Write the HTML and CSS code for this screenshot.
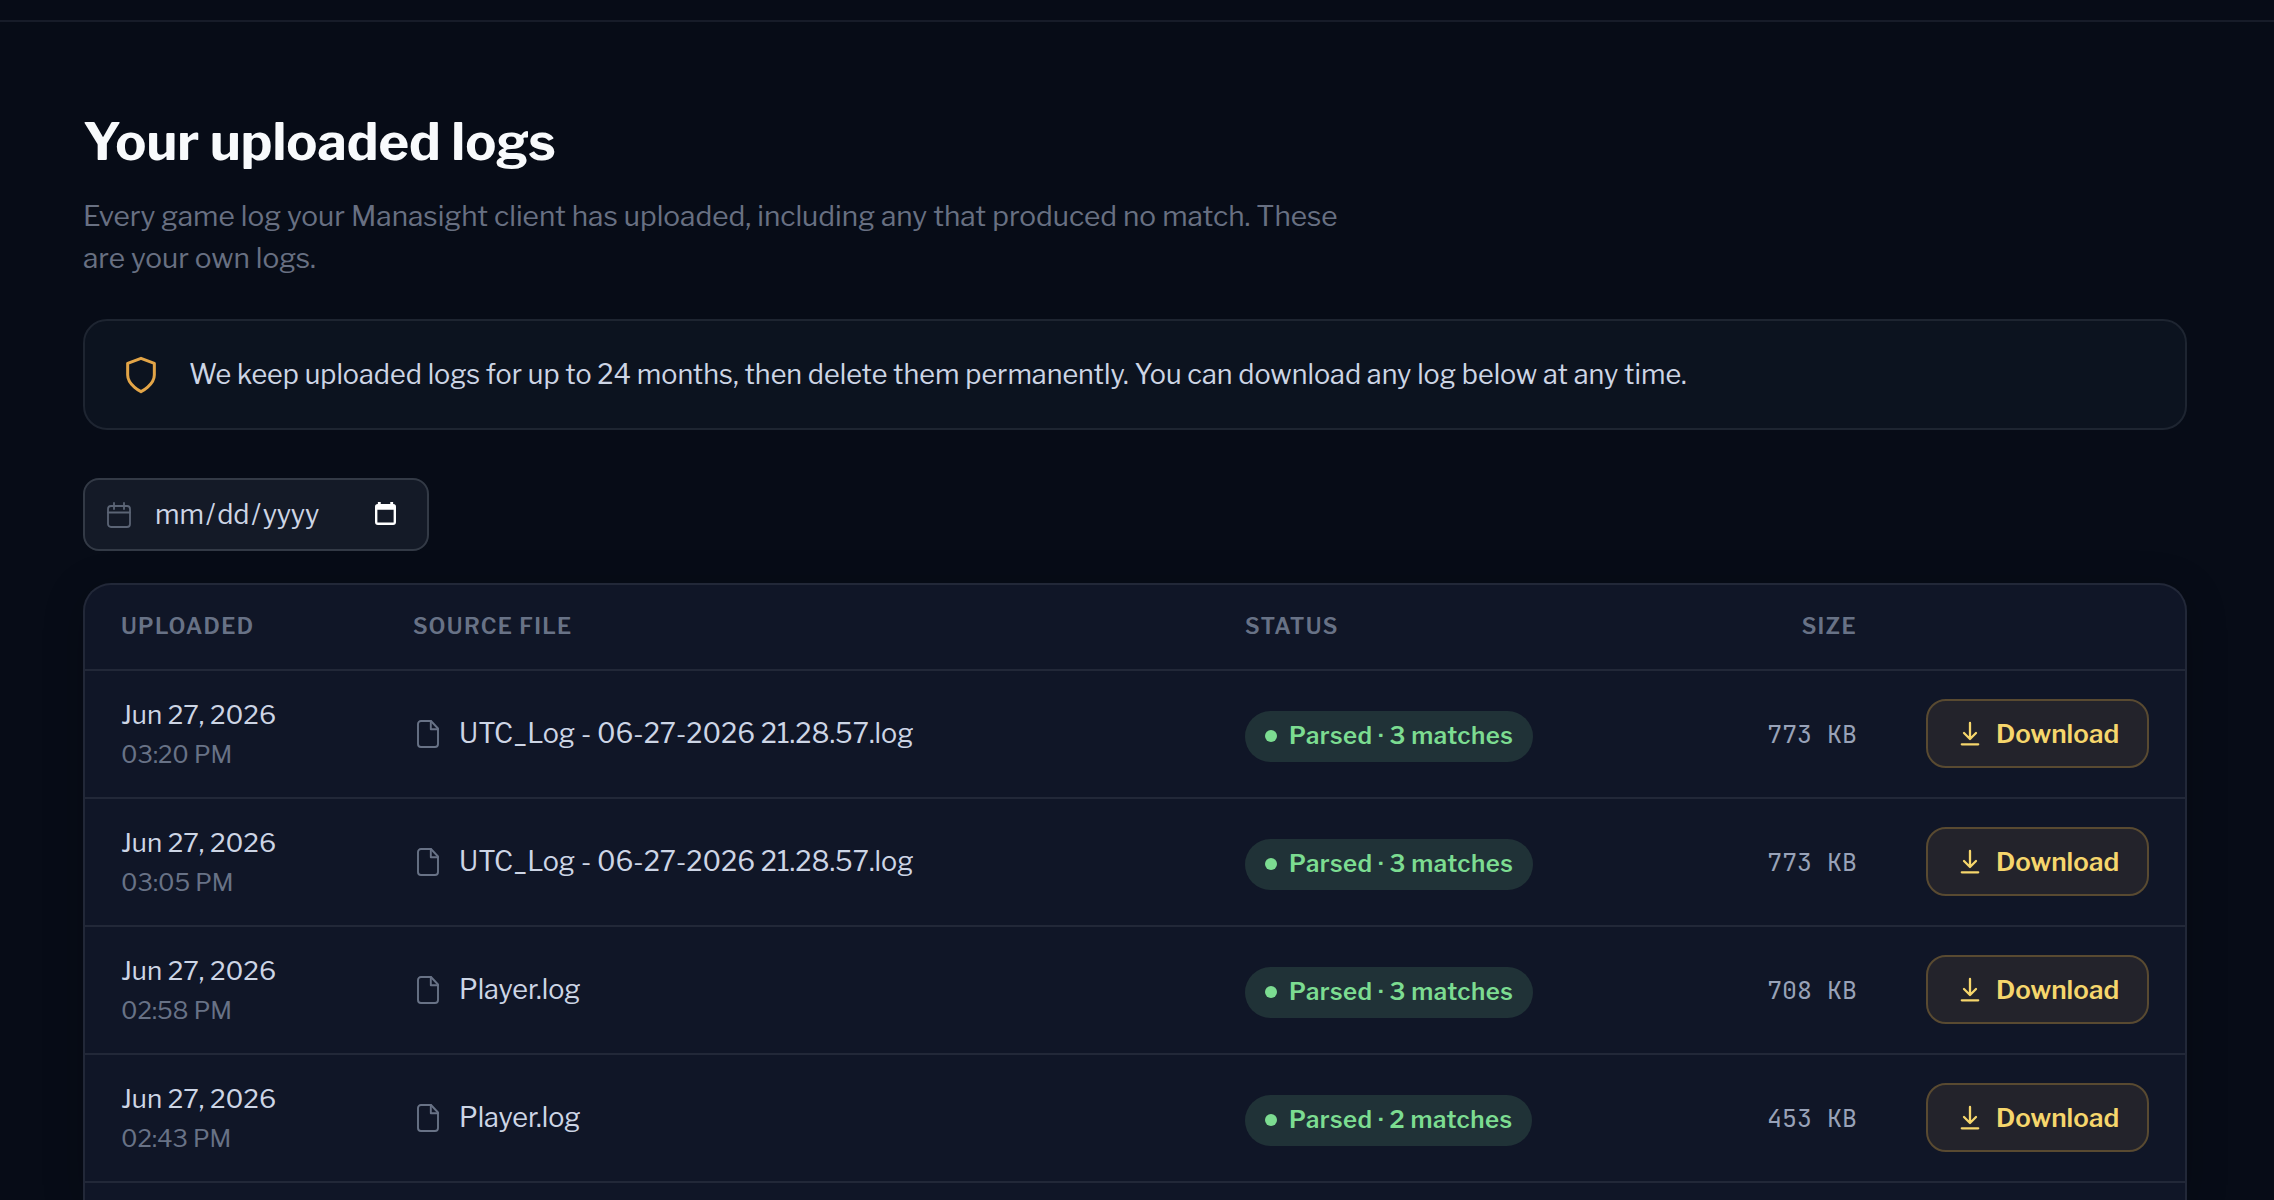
FILE: index.html
```html
<!DOCTYPE html>
<html lang="en">
<head>
<meta charset="utf-8">
<title>Your uploaded logs</title>
<link rel="stylesheet" href="styles.css">
</head>
<body>
<svg class="sprite" aria-hidden="true">
  <symbol id="file" viewBox="0 0 22 28"><path d="M14 1H4a3 3 0 0 0-3 3v20a3 3 0 0 0 3 3h14a3 3 0 0 0 3-3V8.500z"/><path d="M13.800 1v8.200H21"/></symbol>
  <symbol id="download" viewBox="0 0 20 25"><path d="M10 2v16M4 12l6 6 6-6M1.800 23.300h16.400"/></symbol>
</svg>
<header class="topbar"></header>
<main class="page">
  <h1 class="title">Your uploaded logs</h1>
  <p class="intro">Every game log your Manasight client has uploaded, including any that produced no match. These are your own logs.</p>
  <section class="notice">
    <svg class="shield" viewBox="0 0 24 24"><path d="M12 22s8-4 8-10V5l-8-3-8 3v7c0 6 8 10 8 10z"/></svg>
    <p class="notice-text">We keep uploaded logs for up to 24 months, then delete them permanently. You can download any log below at any time.</p>
  </section>
  <div class="date">
    <svg class="cal" viewBox="0 0 24 26"><rect x="1" y="4" width="22" height="21" rx="3"/><path d="M1 10.500h22M7 1v6M17 1v6"/></svg>
    <span class="date-text">mm<i>/</i>dd<i>/</i>yyyy</span>
    <svg class="picker" viewBox="0 0 22 24"><path fill-rule="evenodd" d="M3 0h3v2h10V0h3v2a3 3 0 0 1 3 3v16a3 3 0 0 1-3 3H3a3 3 0 0 1-3-3V5a3 3 0 0 1 3-3zM2.500 8v13.500h17V8z"/></svg>
  </div>
  <section class="table">
    <div class="row head"><span>UPLOADED</span><span>SOURCE FILE</span><span>STATUS</span><span class="right">SIZE</span><span></span></div>
    <div class="row"><div class="when"><span class="day">Jun 27, 2026</span><span class="time">03:20 PM</span></div><div class="file"><svg><use href="#file"/></svg><span>UTC_Log - 06-27-2026 21.28.57.log</span></div><div class="status"><span class="pill">Parsed · 3 matches</span></div><div class="size">773 KB</div><button class="btn"><svg><use href="#download"/></svg>Download</button></div>
    <div class="row"><div class="when"><span class="day">Jun 27, 2026</span><span class="time">03:05 PM</span></div><div class="file"><svg><use href="#file"/></svg><span>UTC_Log - 06-27-2026 21.28.57.log</span></div><div class="status"><span class="pill">Parsed · 3 matches</span></div><div class="size">773 KB</div><button class="btn"><svg><use href="#download"/></svg>Download</button></div>
    <div class="row"><div class="when"><span class="day">Jun 27, 2026</span><span class="time">02:58 PM</span></div><div class="file"><svg><use href="#file"/></svg><span>Player.log</span></div><div class="status"><span class="pill">Parsed · 3 matches</span></div><div class="size">708 KB</div><button class="btn"><svg><use href="#download"/></svg>Download</button></div>
    <div class="row"><div class="when"><span class="day">Jun 27, 2026</span><span class="time">02:43 PM</span></div><div class="file"><svg><use href="#file"/></svg><span>Player.log</span></div><div class="status"><span class="pill">Parsed · 2 matches</span></div><div class="size">453 KB</div><button class="btn"><svg><use href="#download"/></svg>Download</button></div>
  </section>
</main>
</body>
</html>
```
FILE: styles.css
```css
* { box-sizing: border-box; }
body {
  margin: 0;
  height: 1200px;
  overflow: hidden;
  background: #070c17;
  color: #cdd5e5;
  font-family: "Libre Franklin", "Open Sans", sans-serif;
  font-size: 27px;
}
svg { fill: none; stroke: currentColor; stroke-linecap: round; stroke-linejoin: round; flex: none; }
.sprite { display: none; }
.topbar { height: 22px; border-bottom: 2px solid #171c29; }
.page { padding: 0 87px 0 83px; }
.title { margin: 82px 0 0; font-size: 52px; line-height: 76px; font-weight: 700; color: #f8fafc; white-space: nowrap; }
.intro { max-width: 1280px; margin: 15px 0 0; font-size: 28px; line-height: 42px; color: #687082; }
.notice { display: flex; align-items: center; gap: 28px; height: 111px; margin-top: 40px; padding: 0 36px; border: 2px solid #1e2531; border-radius: 24px; background: #0c131f; }
.shield { width: 40px; height: 40px; color: #e3a547; stroke-width: 1.800; }
.notice-text { margin: 0; white-space: nowrap; }
.date { display: flex; align-items: center; width: 346px; height: 73px; margin-top: 48px; padding: 0 31px 0 22px; border: 2px solid #333a46; border-radius: 16px; background: #141a27; }
.cal { width: 24px; height: 26px; color: #5b6475; stroke-width: 1.800; }
.date-text { margin-left: 24px; }
.date-text i { margin: 0 2px; font-style: normal; }
.picker { width: 21px; height: 23px; margin: 0 0 2px auto; fill: #fff; stroke: none; }
.table { margin-top: 32px; height: 617px; border: 2px solid #222838; border-bottom: 0; border-radius: 28px 28px 0 0; background: #101627; box-shadow: 0 8px 40px rgba(0, 0, 0, .22); overflow: hidden; }
.row { display: grid; grid-template-columns: 292px 832px 460px 152px 1fr; align-items: center; height: 128px; padding: 0 36px; border-bottom: 2px solid #222838; }
.head { height: 86px; padding-bottom: 2px; font-size: 22px; font-weight: 600; color: #687286; letter-spacing: 1.300px; }
.right { text-align: right; }
.when { display: flex; flex-direction: column; padding-top: 2px; }
.day { font-size: 26px; line-height: 40px; }
.time { font-size: 24px; line-height: 40px; color: #687286; }
.file { display: flex; align-items: center; gap: 20px; padding-left: 4px; white-space: nowrap; }
.file span { padding-bottom: 2px; }
.file svg { width: 22px; height: 28px; color: #687286; stroke-width: 1.900; }
.status { display: flex; padding-top: 4px; }
.pill { display: inline-flex; align-items: center; gap: 12px; height: 51px; padding: 0 20px 1px; border-radius: 26px; background: #203237; color: #7cdc91; font-size: 24px; font-weight: 600; letter-spacing: .480px; white-space: nowrap; }
.pill::before { content: ""; width: 12px; height: 12px; border-radius: 50%; background: currentColor; }
.size { font-family: "JetBrains Mono", "Liberation Mono", monospace; font-size: 25px; text-align: right; color: #98a2b8; }
.btn { display: flex; align-items: center; gap: 16px; justify-self: end; width: 223px; height: 69px; margin-bottom: 1px; padding: 0 0 0 32px; border: 2px solid #594a31; border-radius: 20px; background: #23232b; color: #f6d66c; font: 600 26px "Libre Franklin", "Open Sans", sans-serif; }
.btn svg { width: 20px; height: 25px; stroke-width: 2.300; }
```
